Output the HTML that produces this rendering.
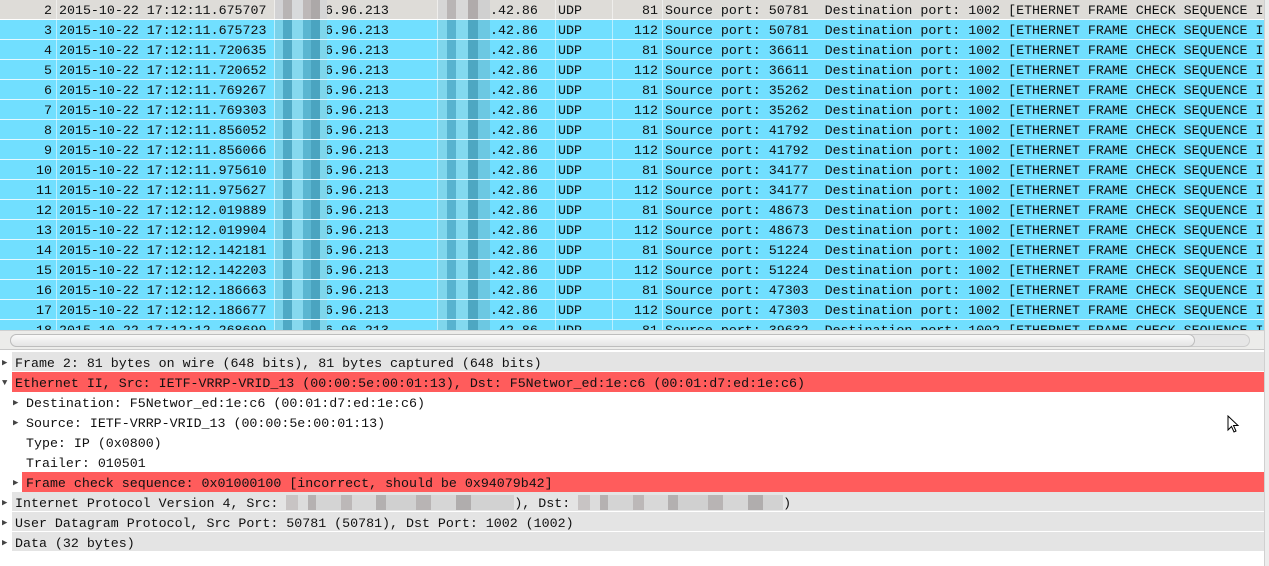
<!DOCTYPE html>
<html><head><meta charset="utf-8"><style>
*{margin:0;padding:0;box-sizing:border-box}
body{width:1269px;height:566px;overflow:hidden;background:#fff;font-family:"Liberation Mono","DejaVu Sans Mono",monospace;font-size:13.3px;color:#111;position:relative}
.list{position:absolute;left:0;top:0;width:1264px;height:330px;overflow:hidden;background:#71dfff}
.r{position:absolute;left:0;width:1264px;height:20px;background:#71dfff;border-bottom:1px solid #e6f9ff;line-height:19px;white-space:pre}
.r.g{background:#dedcd8;border-bottom:1px solid #fff}
.r span{position:absolute;top:1px}
.n{right:1212px;text-align:right}
.t{left:59px}.s{left:325px}.d{left:490px}.p{left:558px}.l{right:606px}.i{left:665px}
.sep{position:absolute;top:0;height:330px;width:1px;background:rgba(255,255,255,.5)}
.b1{position:absolute;left:275px;top:0;width:52px;height:19px;background:linear-gradient(90deg,#7ad2ea 0 8px,#4fa9c5 8px 17px,#86d8ee 17px 28px,#5bb6d1 28px 36px,#4aa4c0 36px 45px,#7fd6ec 45px)}
.b2{position:absolute;left:438px;top:0;width:52px;height:19px;background:linear-gradient(90deg,#7fd6ec 0 9px,#58b3cf 9px 18px,#83d9ef 18px 30px,#4da7c2 30px 40px,#6cc8e2 40px)}
.g .b1{background:linear-gradient(90deg,#d2d2d4 0 8px,#b8b4b4 8px 17px,#d8dadc 17px 28px,#bdb8b8 28px 36px,#aca8a8 36px 45px,#d6d6d6 45px)}
.g .b2{background:linear-gradient(90deg,#d6d6d6 0 9px,#b9b5b5 9px 18px,#d8d8d8 18px 30px,#b0abab 30px 40px,#d0d0d0 40px)}
.hs{position:absolute;left:0;top:330px;width:1264px;height:20px;background:#ececea;border-top:1px solid #d0d0d0;border-bottom:1px solid #c8c8c8}
.hs .th{position:absolute;left:10px;top:3px;width:1185px;height:13px;border:1px solid #bdbdbd;border-radius:7px;background:linear-gradient(#fafafa,#e4e4e4)}
.hs .tr{position:absolute;left:10px;top:3px;width:1240px;height:13px;border:1px solid #ccc;border-radius:7px;background:#e6e6e6}
.rb{position:absolute;right:0;top:0;width:5px;height:566px;background:#ededed;border-left:1px solid #d0d0d0}
.tree .row{position:absolute;height:20px;line-height:19px;padding-top:2px;white-space:pre}
.gr{background:#e4e4e4;border-bottom:1px solid #fff}
.red{background:#ff5c5c}
.ar{position:absolute;font-size:9px;color:#444;line-height:19px;padding-top:2px}
.bl{display:inline-block;height:15px;vertical-align:-3px;background:linear-gradient(90deg,#c8c4c4 0 12px,#dcdcdc 12px 22px,#b5b1b1 22px 30px,#d4d4d4 30px 55px,#bcb8b8 55px 66px,#d8d8d8 66px 90px,#b3b0b0 90px 100px,#d0d0d0 100px 130px,#b8b4b4 130px 145px,#d6d6d6 145px 170px,#b0adad 170px 185px,#d2d2d2 185px)}
.cur{position:absolute;left:1227px;top:415px}
</style></head><body>
<div class="list">
<div class="r g" style="top:0"><span class="n">2</span><span class="t">2015-10-22 17:12:11.675707</span><span class="s">6.96.213</span><i class="b1"></i><span class="d">.42.86</span><i class="b2"></i><span class="p">UDP</span><span class="l">81</span><span class="i">Source port: 50781  Destination port: 1002 [ETHERNET FRAME CHECK SEQUENCE I</span></div>
<div class="r" style="top:20px"><span class="n">3</span><span class="t">2015-10-22 17:12:11.675723</span><span class="s">6.96.213</span><i class="b1"></i><span class="d">.42.86</span><i class="b2"></i><span class="p">UDP</span><span class="l">112</span><span class="i">Source port: 50781  Destination port: 1002 [ETHERNET FRAME CHECK SEQUENCE I</span></div>
<div class="r" style="top:40px"><span class="n">4</span><span class="t">2015-10-22 17:12:11.720635</span><span class="s">6.96.213</span><i class="b1"></i><span class="d">.42.86</span><i class="b2"></i><span class="p">UDP</span><span class="l">81</span><span class="i">Source port: 36611  Destination port: 1002 [ETHERNET FRAME CHECK SEQUENCE I</span></div>
<div class="r" style="top:60px"><span class="n">5</span><span class="t">2015-10-22 17:12:11.720652</span><span class="s">6.96.213</span><i class="b1"></i><span class="d">.42.86</span><i class="b2"></i><span class="p">UDP</span><span class="l">112</span><span class="i">Source port: 36611  Destination port: 1002 [ETHERNET FRAME CHECK SEQUENCE I</span></div>
<div class="r" style="top:80px"><span class="n">6</span><span class="t">2015-10-22 17:12:11.769267</span><span class="s">6.96.213</span><i class="b1"></i><span class="d">.42.86</span><i class="b2"></i><span class="p">UDP</span><span class="l">81</span><span class="i">Source port: 35262  Destination port: 1002 [ETHERNET FRAME CHECK SEQUENCE I</span></div>
<div class="r" style="top:100px"><span class="n">7</span><span class="t">2015-10-22 17:12:11.769303</span><span class="s">6.96.213</span><i class="b1"></i><span class="d">.42.86</span><i class="b2"></i><span class="p">UDP</span><span class="l">112</span><span class="i">Source port: 35262  Destination port: 1002 [ETHERNET FRAME CHECK SEQUENCE I</span></div>
<div class="r" style="top:120px"><span class="n">8</span><span class="t">2015-10-22 17:12:11.856052</span><span class="s">6.96.213</span><i class="b1"></i><span class="d">.42.86</span><i class="b2"></i><span class="p">UDP</span><span class="l">81</span><span class="i">Source port: 41792  Destination port: 1002 [ETHERNET FRAME CHECK SEQUENCE I</span></div>
<div class="r" style="top:140px"><span class="n">9</span><span class="t">2015-10-22 17:12:11.856066</span><span class="s">6.96.213</span><i class="b1"></i><span class="d">.42.86</span><i class="b2"></i><span class="p">UDP</span><span class="l">112</span><span class="i">Source port: 41792  Destination port: 1002 [ETHERNET FRAME CHECK SEQUENCE I</span></div>
<div class="r" style="top:160px"><span class="n">10</span><span class="t">2015-10-22 17:12:11.975610</span><span class="s">6.96.213</span><i class="b1"></i><span class="d">.42.86</span><i class="b2"></i><span class="p">UDP</span><span class="l">81</span><span class="i">Source port: 34177  Destination port: 1002 [ETHERNET FRAME CHECK SEQUENCE I</span></div>
<div class="r" style="top:180px"><span class="n">11</span><span class="t">2015-10-22 17:12:11.975627</span><span class="s">6.96.213</span><i class="b1"></i><span class="d">.42.86</span><i class="b2"></i><span class="p">UDP</span><span class="l">112</span><span class="i">Source port: 34177  Destination port: 1002 [ETHERNET FRAME CHECK SEQUENCE I</span></div>
<div class="r" style="top:200px"><span class="n">12</span><span class="t">2015-10-22 17:12:12.019889</span><span class="s">6.96.213</span><i class="b1"></i><span class="d">.42.86</span><i class="b2"></i><span class="p">UDP</span><span class="l">81</span><span class="i">Source port: 48673  Destination port: 1002 [ETHERNET FRAME CHECK SEQUENCE I</span></div>
<div class="r" style="top:220px"><span class="n">13</span><span class="t">2015-10-22 17:12:12.019904</span><span class="s">6.96.213</span><i class="b1"></i><span class="d">.42.86</span><i class="b2"></i><span class="p">UDP</span><span class="l">112</span><span class="i">Source port: 48673  Destination port: 1002 [ETHERNET FRAME CHECK SEQUENCE I</span></div>
<div class="r" style="top:240px"><span class="n">14</span><span class="t">2015-10-22 17:12:12.142181</span><span class="s">6.96.213</span><i class="b1"></i><span class="d">.42.86</span><i class="b2"></i><span class="p">UDP</span><span class="l">81</span><span class="i">Source port: 51224  Destination port: 1002 [ETHERNET FRAME CHECK SEQUENCE I</span></div>
<div class="r" style="top:260px"><span class="n">15</span><span class="t">2015-10-22 17:12:12.142203</span><span class="s">6.96.213</span><i class="b1"></i><span class="d">.42.86</span><i class="b2"></i><span class="p">UDP</span><span class="l">112</span><span class="i">Source port: 51224  Destination port: 1002 [ETHERNET FRAME CHECK SEQUENCE I</span></div>
<div class="r" style="top:280px"><span class="n">16</span><span class="t">2015-10-22 17:12:12.186663</span><span class="s">6.96.213</span><i class="b1"></i><span class="d">.42.86</span><i class="b2"></i><span class="p">UDP</span><span class="l">81</span><span class="i">Source port: 47303  Destination port: 1002 [ETHERNET FRAME CHECK SEQUENCE I</span></div>
<div class="r" style="top:300px"><span class="n">17</span><span class="t">2015-10-22 17:12:12.186677</span><span class="s">6.96.213</span><i class="b1"></i><span class="d">.42.86</span><i class="b2"></i><span class="p">UDP</span><span class="l">112</span><span class="i">Source port: 47303  Destination port: 1002 [ETHERNET FRAME CHECK SEQUENCE I</span></div>
<div class="r" style="top:320px"><span class="n">18</span><span class="t">2015-10-22 17:12:12.268699</span><span class="s">6.96.213</span><i class="b1"></i><span class="d">.42.86</span><i class="b2"></i><span class="p">UDP</span><span class="l">81</span><span class="i">Source port: 39632  Destination port: 1002 [ETHERNET FRAME CHECK SEQUENCE I</span></div>
<div class="sep" style="left:56px"></div><div class="sep" style="left:274px"></div><div class="sep" style="left:437px"></div><div class="sep" style="left:555px"></div><div class="sep" style="left:612px"></div><div class="sep" style="left:662px"></div>
</div>
<div class="hs"><div class="tr"></div><div class="th"></div></div>
<div class="tree">
<span class="ar" style="left:2px;top:352px">▶</span><div class="row gr" style="left:12px;top:352px;width:1252px;padding-left:3px">Frame 2: 81 bytes on wire (648 bits), 81 bytes captured (648 bits)</div>
<span class="ar" style="left:2px;top:372px">▼</span><div class="row red" style="left:12px;top:372px;width:1252px;padding-left:3px">Ethernet II, Src: IETF-VRRP-VRID_13 (00:00:5e:00:01:13), Dst: F5Networ_ed:1e:c6 (00:01:d7:ed:1e:c6)</div>
<span class="ar" style="left:13px;top:392px">▶</span><div class="row" style="left:26px;top:392px">Destination: F5Networ_ed:1e:c6 (00:01:d7:ed:1e:c6)</div>
<span class="ar" style="left:13px;top:412px">▶</span><div class="row" style="left:26px;top:412px">Source: IETF-VRRP-VRID_13 (00:00:5e:00:01:13)</div>
<div class="row" style="left:26px;top:432px">Type: IP (0x0800)</div>
<div class="row" style="left:26px;top:452px">Trailer: 010501</div>
<span class="ar" style="left:13px;top:472px">▶</span><div class="row red" style="left:22px;top:472px;width:1242px;padding-left:4px">Frame check sequence: 0x01000100 [incorrect, should be 0x94079b42]</div>
<span class="ar" style="left:2px;top:492px">▶</span><div class="row gr" style="left:12px;top:492px;width:1252px;padding-left:3px">Internet Protocol Version 4, Src: <span class="bl" style="width:228px"></span>), Dst: <span class="bl" style="width:205px"></span>)</div>
<span class="ar" style="left:2px;top:512px">▶</span><div class="row gr" style="left:12px;top:512px;width:1252px;padding-left:3px">User Datagram Protocol, Src Port: 50781 (50781), Dst Port: 1002 (1002)</div>
<span class="ar" style="left:2px;top:532px">▶</span><div class="row gr" style="left:12px;top:532px;width:1252px;padding-left:3px">Data (32 bytes)</div>
</div>
<div class="rb"></div>
<svg class="cur" width="14" height="20" viewBox="0 0 14 20"><path d="M1 1 L1 15 L4.5 11.5 L7 17 L9 16 L6.5 10.5 L11 10.5 Z" fill="#fff" stroke="#000" stroke-width="1"/></svg>
</body></html>
